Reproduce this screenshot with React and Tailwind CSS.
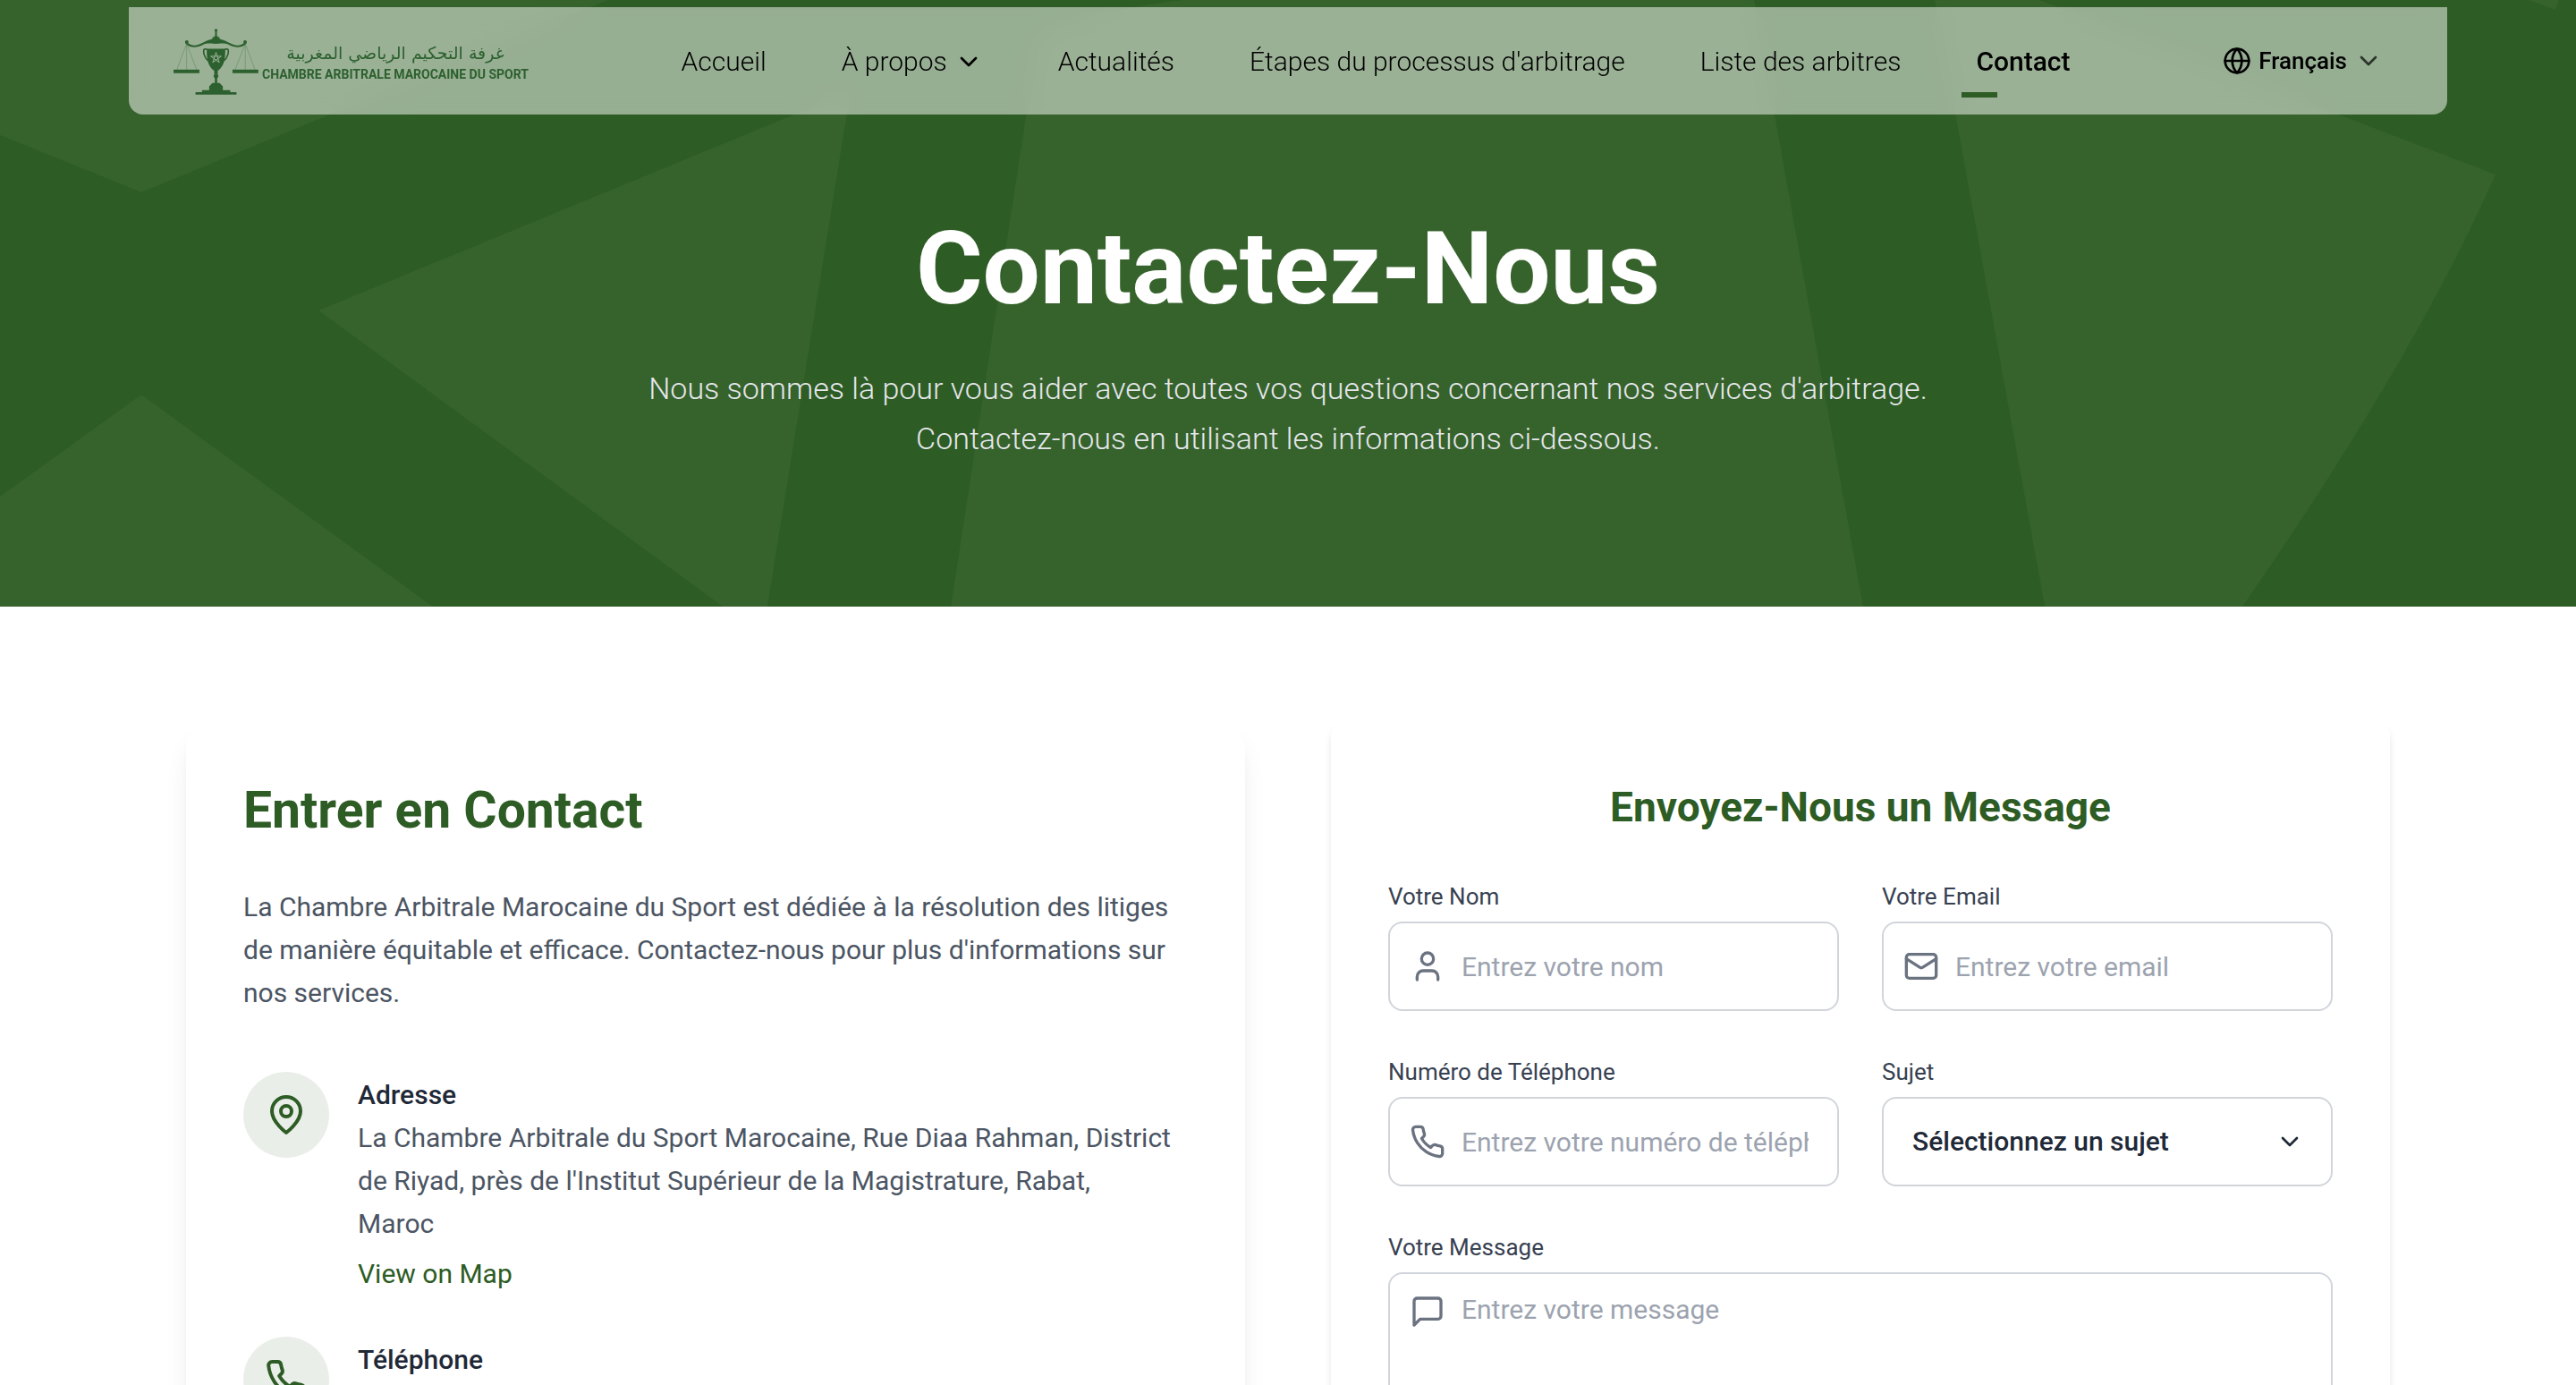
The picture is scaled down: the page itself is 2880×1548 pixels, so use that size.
import React from 'react';
import { ChevronDown, Globe } from 'lucide-react';

const NAV_LINKS = [
  { label: 'Accueil' },
  { label: 'À propos', menu: true },
  { label: 'Actualités' },
  { label: "Étapes du processus d'arbitrage" },
  { label: 'Liste des arbitres' },
  { label: 'Contact', active: true },
];

function Icon({ className, children }) {
  return (
    <svg
      viewBox="0 0 24 24"
      fill="none"
      stroke="currentColor"
      strokeWidth="2"
      strokeLinecap="round"
      strokeLinejoin="round"
      aria-hidden="true"
      className={className}
    >
      {children}
    </svg>
  );
}

const PinIcon = ({ className }) => (
  <Icon className={className}>
    <path d="M20 10c0 6-8 12-8 12s-8-6-8-12a8 8 0 0 1 16 0Z" />
    <circle cx="12" cy="10" r="3" />
  </Icon>
);

const PhoneIcon = ({ className }) => (
  <Icon className={className}>
    <path d="M22 16.92v3a2 2 0 0 1-2.18 2 19.79 19.79 0 0 1-8.63-3.07 19.5 19.5 0 0 1-6-6 19.79 19.79 0 0 1-3.07-8.67A2 2 0 0 1 4.11 2h3a2 2 0 0 1 2 1.72 12.84 12.84 0 0 0 .7 2.81 2 2 0 0 1-.45 2.11L8.09 9.91a16 16 0 0 0 6 6l1.27-1.27a2 2 0 0 1 2.11-.45 12.84 12.84 0 0 0 2.81.7A2 2 0 0 1 22 16.92z" />
  </Icon>
);

const UserIcon = ({ className }) => (
  <Icon className={className}>
    <path d="M19 21v-2a4 4 0 0 0-4-4H9a4 4 0 0 0-4 4v2" />
    <circle cx="12" cy="7" r="4" />
  </Icon>
);

const MailIcon = ({ className }) => (
  <Icon className={className}>
    <rect width="20" height="16" x="2" y="4" rx="2" />
    <path d="m22 7-8.97 5.7a1.94 1.94 0 0 1-2.06 0L2 7" />
  </Icon>
);

const MessageIcon = ({ className }) => (
  <Icon className={className}>
    <path d="M21 15a2 2 0 0 1-2 2H7l-4 4V5a2 2 0 0 1 2-2h14a2 2 0 0 1 2 2z" />
  </Icon>
);

function ScaleSide() {
  return (
    <g>
      <circle cx="236.500" cy="141" r="6" />
      <path d="M232 144 C244 162 270 162 290 151 C304 144 318 146 335 147 V130 C318 130 306 135 292 143 C272 154 254 156 241 145 Z" />
      <path
        d="M236 146 L203 235 M236 146 V235 M236 146 L270 235"
        fill="none"
        stroke="currentColor"
        strokeWidth="1.5"
        opacity="0.6"
      />
      <rect x="192" y="234" width="87" height="12" />
    </g>
  );
}

function Emblem({ className }) {
  return (
    <svg viewBox="192 96 286 223" fill="currentColor" aria-hidden="true" className={className}>
      <circle cx="335" cy="102" r="5" />
      <rect x="332" y="106" width="6" height="18" />
      <path d="M329 121 H341 V125 H347 V146 H323 V125 H329 Z" />
      <ScaleSide />
      <g transform="translate(669.500 0) scale(-1 1)">
        <ScaleSide />
      </g>
      <path d="M304 164 H366 C367 198 362 224 341 238 V249 H329 V238 C308 224 303 198 304 164 Z" />
      <path
        d="M306 167 C290 158 291 176 298 190 C302 200 310 206 318 209 M364 167 C380 158 379 176 372 190 C368 200 360 206 352 209"
        fill="none"
        stroke="currentColor"
        strokeWidth="5"
      />
      <path
        d="M335 176 L346 210 L317 189 H353 L324 210 Z"
        fill="none"
        stroke="#9bb196"
        strokeWidth="3"
      />
      <ellipse cx="335" cy="256" rx="8" ry="7" />
      <path d="M331 246 H339 V279 H347 L358 290 V303 H383 V310 H404 V318 H266 V310 H288 V303 H312 V290 L323 279 H331 Z" />
    </svg>
  );
}

function Logo() {
  return (
    <a href="#accueil" className="flex shrink-0 items-center gap-1 pt-0.5 text-[#2c602e]">
      <Emblem className="h-[74px] w-[95px]" />
      <span className="flex flex-col items-center pb-1">
        <span
          lang="ar"
          dir="rtl"
          className="font-['DejaVu_Sans','Noto_Sans',sans-serif] text-[19px] leading-8 whitespace-nowrap"
        >
          غرفة التحكيم الرياضي المغربية
        </span>
        <span className="text-[14px] leading-4 font-bold whitespace-nowrap">
          CHAMBRE ARBITRALE MAROCAINE DU SPORT
        </span>
      </span>
    </a>
  );
}

function Header() {
  return (
    <header className="relative mx-auto flex h-[120px] w-9/10 items-center justify-between rounded-b-2xl bg-white/50 pr-[72px] pl-[50px] text-black backdrop-blur-md">
      <Logo />
      <nav className="flex items-center gap-[52px] pt-0.5">
        {NAV_LINKS.map(({ label, menu, active }) =>
          menu ? (
            <button
              key={label}
              type="button"
              className="flex items-center gap-2 px-4 text-[30px] leading-[48px] font-light whitespace-nowrap"
            >
              {label}
              <ChevronDown className="size-8" />
            </button>
          ) : (
            <a
              key={label}
              href="#page"
              aria-current={active ? 'page' : undefined}
              className={
                active
                  ? 'relative px-4 text-[30px] leading-[48px] font-medium whitespace-nowrap'
                  : 'px-4 text-[30px] leading-[48px] font-light whitespace-nowrap'
              }
            >
              {label}
              {active && <span className="absolute -bottom-4 left-0 h-1.5 w-10 bg-[#2d5c24]" />}
            </a>
          ),
        )}
      </nav>
      <button type="button" className="flex items-center gap-2 text-[26px] leading-10 font-medium">
        <Globe className="size-8" />
        Français
        <ChevronDown className="size-8 opacity-70" />
      </button>
    </header>
  );
}

function HeroPattern() {
  return (
    <svg
      viewBox="0 0 2880 678"
      preserveAspectRatio="none"
      aria-hidden="true"
      className="absolute inset-0 size-full text-[#36622c]"
      fill="currentColor"
    >
      <path d="M0 0 H680 L158 215 L0 151 Z" />
      <path d="M356 347 L951 102 L858 678 H808 Z" />
      <path d="M0 555 L158 441 L484 678 H0 Z" />
      <path d="M1323 0 H1961 L2083 678 H1063 L1160 45 Q1190 16 1323 0 Z" />
      <path d="M2163 0 H2280 L2790 195 Q2700 400 2507 678 H2286 Z" />
      <path d="M2827 0 H2861 L2857 11 Z" />
    </svg>
  );
}

function Hero() {
  return (
    <section className="relative bg-[#2d5c24] pt-2 pb-[158px] text-white">
      <HeroPattern />
      <Header />
      <div className="relative mt-28 px-12 text-center">
        <h1 className="mb-[46px] text-[114px] leading-[120px] font-bold">Contactez-Nous</h1>
        <p className="mx-auto mb-0.5 max-w-[1536px] text-[34px] leading-[56px] font-light text-gray-200">
          Nous sommes là pour vous aider avec toutes vos questions concernant nos services
          d'arbitrage. Contactez-nous en utilisant les informations ci-dessous.
        </p>
      </div>
    </section>
  );
}

function ContactItem({ icon: IconComponent, title, children }) {
  return (
    <li className="flex gap-8">
      <span className="flex size-24 shrink-0 items-center justify-center rounded-full bg-[#eaeee9] text-[#2d5c24]">
        <IconComponent className="size-12" />
      </span>
      <div className="pt-0.5 text-[30px] leading-[48px] text-[#4b5563]">
        <h3 className="font-medium text-[#1f2937]">{title}</h3>
        {children}
      </div>
    </li>
  );
}

function ContactCard() {
  return (
    <section className="rounded-[32px] bg-white px-16 pt-16 pb-16 shadow-[0_20px_30px_-6px_rgb(0_0_0/0.1),0_8px_12px_-8px_rgb(0_0_0/0.1)]">
      <h2 className="mb-12 text-[57px] leading-[72px] font-bold text-[#2d5c24]">
        Entrer en Contact
      </h2>
      <p className="mb-16 text-[30px] leading-[48px] text-[#4b5563]">
        La Chambre Arbitrale Marocaine du Sport est dédiée à la résolution des litiges de manière
        équitable et efficace. Contactez-nous pour plus d'informations sur nos services.
      </p>
      <ul className="flex flex-col gap-[46px]">
        <ContactItem icon={PinIcon} title="Adresse">
          <p>
            La Chambre Arbitrale du Sport Marocaine, Rue Diaa Rahman, District de Riyad, près de
            l'Institut Supérieur de la Magistrature, Rabat,
            <br />
            Maroc
          </p>
          <a href="#carte" className="mt-2 block text-[#2d5c24]">
            View on Map
          </a>
        </ContactItem>
        <ContactItem icon={PhoneIcon} title="Téléphone" />
      </ul>
    </section>
  );
}

const FIELD =
  'block w-full rounded-2xl border-2 border-[#d1d5db] bg-white text-[30px] leading-[48px] text-[#1f2937] placeholder:text-[#9ca3af]';

function Label({ htmlFor, children }) {
  return (
    <label htmlFor={htmlFor} className="mb-2 block text-[26px] leading-10 text-[#374151]">
      {children}
    </label>
  );
}

function TextField({ id, label, type, placeholder, icon: IconComponent }) {
  return (
    <div>
      <Label htmlFor={id}>{label}</Label>
      <div className="relative">
        <IconComponent className="pointer-events-none absolute top-1/2 left-6 size-10 -translate-y-1/2 text-[#6b7280]" />
        <input
          id={id}
          type={type}
          placeholder={placeholder}
          className={`${FIELD} h-[100px] pr-8 pl-20`}
        />
      </div>
    </div>
  );
}

function MessageCard() {
  return (
    <section className="rounded-2xl bg-white px-16 pt-16 pb-16 shadow-[0_8px_12px_-2px_rgb(0_0_0/0.1),0_4px_8px_-4px_rgb(0_0_0/0.1)]">
      <h2 className="mb-12 text-center text-[46px] leading-[64px] font-bold text-[#2d5c24]">
        Envoyez-Nous un Message
      </h2>
      <form className="flex flex-col gap-12">
        <div className="grid grid-cols-2 gap-12">
          <TextField
            id="nom"
            label="Votre Nom"
            type="text"
            placeholder="Entrez votre nom"
            icon={UserIcon}
          />
          <TextField
            id="email"
            label="Votre Email"
            type="email"
            placeholder="Entrez votre email"
            icon={MailIcon}
          />
          <TextField
            id="telephone"
            label="Numéro de Téléphone"
            type="tel"
            placeholder="Entrez votre numéro de téléphone"
            icon={PhoneIcon}
          />
          <div>
            <Label htmlFor="sujet">Sujet</Label>
            <div className="relative">
              <select id="sujet" className={`${FIELD} h-[100px] appearance-none pr-20 pl-8 font-medium`}>
                <option>Sélectionnez un sujet</option>
              </select>
              <ChevronDown className="pointer-events-none absolute top-1/2 right-8 size-8 -translate-y-1/2 text-[#1f2937]" />
            </div>
          </div>
        </div>
        <div>
          <Label htmlFor="message">Votre Message</Label>
          <div className="relative">
            <MessageIcon className="pointer-events-none absolute top-6 left-6 size-10 text-[#6b7280]" />
            <textarea
              id="message"
              rows={6}
              placeholder="Entrez votre message"
              className={`${FIELD} resize-none py-4 pr-8 pl-20`}
            />
          </div>
        </div>
      </form>
    </section>
  );
}

export default function App() {
  return (
    <div className="h-screen overflow-hidden bg-white font-['Roboto',sans-serif]">
      <Hero />
      <main className="mx-auto grid max-w-[2560px] grid-cols-2 gap-24 px-12 py-32">
        <ContactCard />
        <MessageCard />
      </main>
    </div>
  );
}
